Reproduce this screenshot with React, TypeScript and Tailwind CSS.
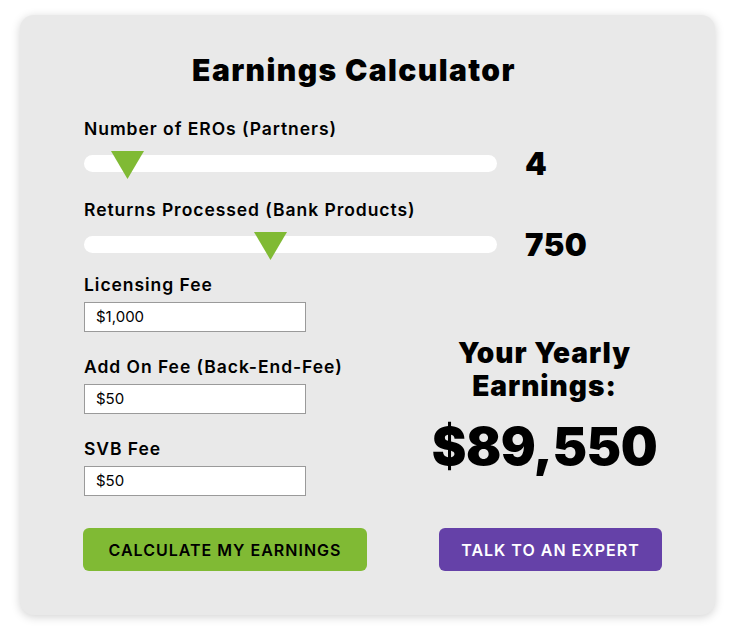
const green = '#80ba34';

function Slider({ label, value, pos }: { label: string; value: string; pos: number }) {
  return (
    <div>
      <div className="text-[17.5px] font-semibold leading-[20px] tracking-[0.95px] text-black">{label}</div>
      <div className="mt-[9px] flex items-center">
        <div className="relative h-[17px] w-[413px] rounded-full bg-white">
          <svg
            className="absolute top-[-4px]"
            style={{ left: pos - 16 }}
            width="33"
            height="28"
            viewBox="0 0 33 28"
          >
            <polygon points="0,0 33,0 16.5,28" fill={green} />
          </svg>
        </div>
        <div className="ml-[28px] text-[31px] font-black leading-none tracking-[0.5px] text-black">{value}</div>
      </div>
    </div>
  );
}

function Field({ label, value }: { label: string; value: string }) {
  return (
    <div>
      <div className="text-[17.5px] font-semibold leading-[20px] tracking-[0.95px] text-black">{label}</div>
      <div className="mt-[7px] flex h-[30px] w-[222px] items-center border border-[#9a9a9a] bg-white px-[11px] text-[15px] text-black">
        {value}
      </div>
    </div>
  );
}

export default function App() {
  return (
    <div className="min-h-[640px] bg-white pl-[20px] pt-[15px]" style={{ fontFamily: 'Inter, "Liberation Sans", sans-serif' }}>
      <div className="h-[600px] w-[695px] rounded-[14px] bg-[#e9e9e9] shadow-[0_2px_10px_rgba(0,0,0,0.18)]">
        <h1 className="pr-[27px] pt-[37px] text-center text-[30px] font-black leading-[36px] tracking-[1.4px] text-black">
          Earnings Calculator
        </h1>

        <div className="mt-[31px] flex flex-col gap-[21px] pl-[64px]">
          <Slider label="Number of EROs (Partners)" value="4" pos={43} />
          <Slider label="Returns Processed (Bank Products)" value="750" pos={186} />
        </div>

        <div className="mt-[15px] flex pl-[64px]">
          <div className="flex w-[300px] flex-col gap-[25px]">
            <Field label="Licensing Fee" value="$1,000" />
            <Field label="Add On Fee (Back-End-Fee)" value="$50" />
            <Field label="SVB Fee" value="$50" />
          </div>
          <div className="flex flex-1 flex-col items-center pr-[10px] pt-[62px]">
            <div className="text-center text-[28px] font-black leading-[33px] tracking-[1px] text-black">
              Your Yearly
              <br />
              Earnings:
            </div>
            <div className="mt-[14px] text-[52px] font-black leading-[60px] tracking-[-0.5px] text-black">$89,550</div>
          </div>
        </div>

        <div className="mt-[32px] flex pl-[63px]">
          <button className="h-[43px] w-[284px] rounded-[6px] bg-[#80ba34] text-[16px] font-semibold tracking-[1px] text-black">
            CALCULATE MY EARNINGS
          </button>
          <button className="ml-[72px] h-[43px] w-[223px] rounded-[6px] bg-[#6541a8] text-[16px] font-semibold tracking-[1px] text-white">
            TALK TO AN EXPERT
          </button>
        </div>
      </div>
    </div>
  );
}
